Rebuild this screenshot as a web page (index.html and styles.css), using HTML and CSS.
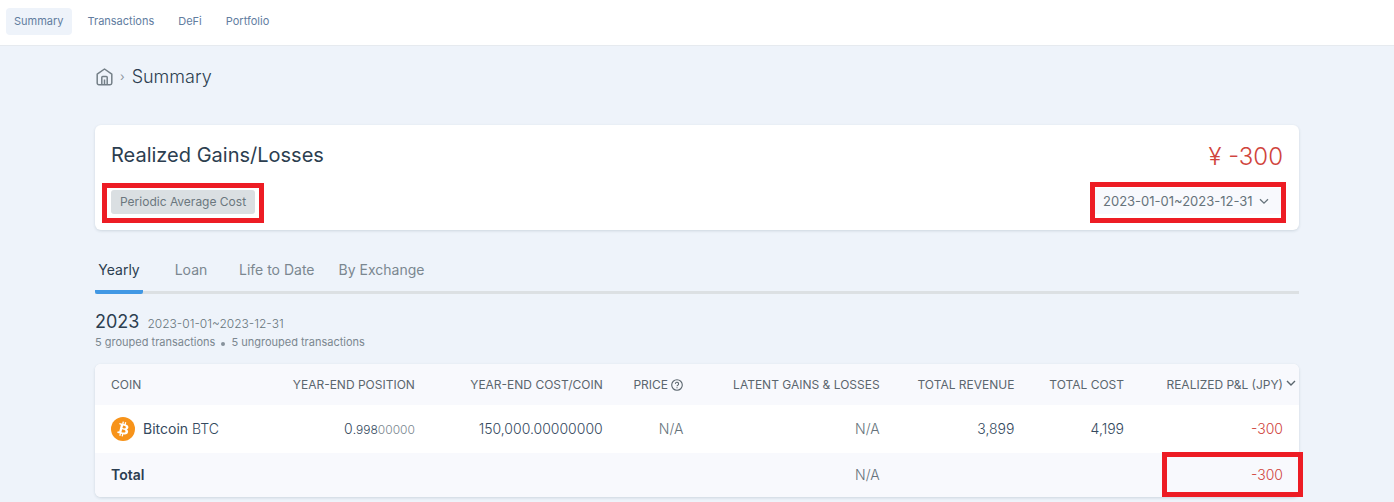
FILE: index.html
```
<!DOCTYPE html>
<html lang="en">
<head>
<meta charset="utf-8">
<meta name="viewport" content="width=device-width, initial-scale=1">
<title>Summary</title>
<link rel="stylesheet" href="styles.css">
</head>
<body>
<header class="topbar">
  <nav class="nav">
    <a class="nav-link nav-link-active" href="#">Summary</a>
    <a class="nav-link" href="#">Transactions</a>
    <a class="nav-link" href="#">DeFi</a>
    <a class="nav-link" href="#">Portfolio</a>
  </nav>
</header>
<main class="page">
  <div class="breadcrumb">
    <a class="home" href="#" aria-label="Home"><svg width="18" height="18" viewBox="0 0 18 18" fill="none" stroke="currentColor" stroke-width="1.500" stroke-linejoin="round"><path d="M2.200 6.200 9.500 1l7.300 5.200V15a1.700 1.700 0 0 1-1.700 1.700H3.900A1.700 1.700 0 0 1 2.200 15Z"/><path d="M6.800 16.500V9.500a.9.900 0 0 1 .9-.9h3.600a.9.900 0 0 1 .9.900v7M9.500 11.500v5"/></svg></a>
    <span class="crumb-sep">›</span>
    <h1 class="crumb-title">Summary</h1>
  </div>

  <section class="card summary">
    <div class="summary-row summary-head">
      <h2 class="summary-title">Realized Gains/Losses</h2>
      <span class="summary-value">¥ -300</span>
    </div>
    <div class="summary-row summary-foot">
      <span class="badge marked marked-badge">Periodic Average Cost</span>
      <span class="period marked marked-period">
        <select class="period-select" aria-label="Period"><option>2023-01-01~2023-12-31</option></select>
        <svg class="period-chevron" width="10" height="7" viewBox="0 0 10 7" fill="none" stroke="currentColor" stroke-width="1.300"><path d="M1 1.200l4 4 4-4"/></svg>
      </span>
    </div>
  </section>

  <nav class="tabs">
    <a class="tab tab-active" href="#">Yearly</a>
    <a class="tab" href="#">Loan</a>
    <a class="tab" href="#">Life to Date</a>
    <a class="tab" href="#">By Exchange</a>
  </nav>

  <div class="year">
    <h2 class="year-title">2023</h2>
    <span class="year-range">2023-01-01~2023-12-31</span>
  </div>
  <p class="counts"><span>5 grouped transactions</span><i class="dot"></i><span>5 ungrouped transactions</span></p>

  <table class="card coins">
    <colgroup><col class="c-coin"><col class="c-position"><col class="c-unit"><col class="c-price"><col class="c-latent"><col class="c-revenue"><col class="c-cost"><col class="c-pl"></colgroup>
    <thead>
      <tr>
        <th scope="col">COIN</th>
        <th scope="col">YEAR-END POSITION</th>
        <th scope="col">YEAR-END COST/COIN</th>
        <th scope="col">PRICE <svg class="help" width="12" height="12" viewBox="0 0 12 12" fill="none" stroke="currentColor" stroke-width="1.100"><circle cx="6" cy="6" r="5.300"/><path d="M4.400 4.900a1.600 1.600 0 1 1 2.400 1.300C6.200 6.500 6 6.700 6 7.300M6 8.200v1.100"/></svg></th>
        <th scope="col">LATENT GAINS &amp; LOSSES</th>
        <th scope="col">TOTAL REVENUE</th>
        <th scope="col">TOTAL COST</th>
        <th scope="col"><span class="sorted">REALIZED P&amp;L (JPY)<svg class="sort" width="10" height="7" viewBox="0 0 10 7" fill="none" stroke="currentColor" stroke-width="1.400"><path d="M1 1l4 4 4-4"/></svg></span></th>
      </tr>
    </thead>
    <tbody>
      <tr>
        <td><span class="coin"><svg width="24" height="24" viewBox="0 0 32 32"><circle cx="16" cy="16" r="16" fill="#f7931a"/><path fill="#fff" d="M23.189 14.020c.314-2.096-1.283-3.223-3.465-3.975l.708-2.840-1.728-.430-.690 2.765c-.454-.114-.920-.220-1.385-.326l.695-2.783L15.596 6l-.708 2.839c-.376-.086-.746-.170-1.104-.260l.002-.009-2.384-.595-.460 1.846s1.283.294 1.256.312c.700.175.826.638.805 1.006l-.806 3.235c.048.012.110.030.180.057l-.183-.045-1.130 4.532c-.086.212-.303.531-.793.410.018.025-1.256-.313-1.256-.313l-.858 1.978 2.250.561c.418.105.828.215 1.231.318l-.715 2.872 1.727.430.708-2.840c.472.127.930.245 1.378.357l-.706 2.828 1.728.430.715-2.866c2.948.558 5.164.333 6.097-2.333.752-2.146-.037-3.385-1.588-4.192 1.130-.260 1.980-1.003 2.207-2.538zm-3.950 5.538c-.533 2.147-4.148.986-5.320.695l.950-3.805c1.172.293 4.929.872 4.370 3.110zm.535-5.569c-.487 1.953-3.495.960-4.470.717l.860-3.450c.975.243 4.118.696 3.610 2.733z"/></svg><span class="coin-name">Bitcoin <span class="coin-code">BTC</span></span></span></td>
        <td>0<span class="decimals">.998</span><span class="decimals zeros">00000</span></td>
        <td>150,000.00000000</td>
        <td class="muted">N/A</td>
        <td class="muted">N/A</td>
        <td>3,899</td>
        <td>4,199</td>
        <td class="loss">-300</td>
      </tr>
    </tbody>
    <tfoot>
      <tr>
        <th scope="row">Total</th>
        <td></td><td></td><td></td>
        <td class="muted">N/A</td>
        <td></td><td></td>
        <td class="loss marked marked-total">-300</td>
      </tr>
    </tfoot>
  </table>
</main>
</body>
</html>
```
FILE: styles.css
```
* { box-sizing: border-box; }
body {
  margin: 0;
  background: #eef3fa;
  color: #34495e;
  font-family: Inter, "Open Sans", sans-serif;
  font-size: 14px;
  line-height: 20px;
}
a { color: inherit; text-decoration: none; }
h1, h2, p { margin: 0; font-weight: 400; }
svg { flex: none; }

.topbar { padding: 8px 6px 10px; background: #fff; border-bottom: 1px solid #e6eaef; }
.nav { display: flex; gap: 8px; }
.nav-link { padding: 3px 8px 4px; border-radius: 4px; font-size: 11px; color: #627d9f; line-height: 20px; }
.nav-link-active { background: #eef3fa; }

.page { max-width: 1204px; margin: 0 auto; padding-bottom: 5px; }
.breadcrumb { display: flex; align-items: center; gap: 7px; padding: 19px 0 36px; }
.home { display: flex; color: #747f87; }
.crumb-sep { color: #8b959e; font-size: 12px; }
.crumb-title { font-size: 18px; font-weight: 300; line-height: 24px; color: #2c3e50; }

.card { background: #fff; border-radius: 6px; box-shadow: 0 1px 3px rgba(40, 60, 80, 0.16); }
.summary { padding: 16px; }
.summary-row { display: flex; justify-content: space-between; }
.summary-head { align-items: flex-start; }
.summary-foot { align-items: flex-end; padding-top: 15px; }
.summary-title { font-size: 20px; line-height: 28px; color: #2c3e50; }
.summary-value { font-size: 24px; font-weight: 300; line-height: 32px; color: #d0443c; }
.badge { padding: 2px 9px; border-radius: 3px; background: #dadfe2; color: #6b777e; font-size: 12px; }
.period { display: flex; align-items: center; background: #f8f9fd; color: #66737b; }
.period-select {
  appearance: none;
  border: 0;
  padding: 3px 30px 3px 8px;
  background: transparent;
  color: inherit;
  font: inherit;
  font-size: 13px;
  line-height: 20px;
}
.period-chevron { position: absolute; right: 14px; pointer-events: none; }

.marked { position: relative; }
.marked::after { content: ""; position: absolute; border: 5px solid #ed1c24; pointer-events: none; }
.marked-badge::after { inset: -7px -9px -9px; }
.marked-period::after { inset: -6px -3px -9px -5px; }
.marked-total::after { inset: -1px -4px 0 22px; }

.tabs { display: flex; gap: 24px; margin-top: 30px; border-bottom: 3px solid #dce0e3; }
.tab { min-width: 48px; padding-bottom: 10px; line-height: 20px; text-align: center; color: #7b8790; }
.tab-active { margin-bottom: -3px; border-bottom: 4px solid #4198e4; border-radius: 2px; color: #2c3e50; }

.year { display: flex; align-items: baseline; gap: 8px; margin-top: 16px; }
.year-title { font-size: 18px; line-height: 24px; color: #2c3e50; }
.year-range { font-size: 12px; font-weight: 300; color: #66737b; }
.counts { display: flex; align-items: center; gap: 6px; font-size: 11px; line-height: 16px; color: #7b8790; }
.dot { width: 4px; height: 4px; margin-top: 4px; border-radius: 50%; background: #87929b; }

.coins { width: 100%; margin-top: 14px; table-layout: fixed; border-collapse: separate; border-spacing: 0; white-space: nowrap; }
.c-coin { width: 14.700%; }
.c-position { width: 13.200%; }
.c-unit { width: 15.600%; }
.c-price { width: 6.700%; }
.c-latent { width: 16.300%; }
.c-revenue { width: 11.200%; }
.c-cost { width: 9.100%; }
.c-pl { width: 13.200%; }
.coins th, .coins td { padding: 0 16px; text-align: right; font-weight: 300; }
.coins th:first-child { text-align: left; }
.coins thead th { height: 41px; padding-left: 0; background: #f8f9fd; color: #5b666e; font-size: 12px; font-weight: 400; }
.coins thead th:first-child { padding-left: 16px; border-top-left-radius: 6px; }
.coins thead th:last-child { border-top-right-radius: 6px; }
.coins tbody td { height: 48px; }
.coins tbody td:first-child { text-align: left; }
.coins tfoot th, .coins tfoot td { height: 44px; background: #f8f9fd; }
.coins tfoot th { font-weight: 600; color: #2c3e50; border-bottom-left-radius: 6px; }
.coins tfoot td:last-child { border-bottom-right-radius: 6px; }
.coins td.muted { color: #66737b; }
.coins td.loss { color: #d0443c; }
.coin { display: flex; align-items: center; gap: 8px; }
.coin-name { font-weight: 400; }
.coin-code { font-weight: 300; }
.decimals { font-size: 12px; }
.zeros { color: #7b8790; }
.help { vertical-align: -2px; }
.sorted { position: relative; }
.sort { position: absolute; left: 100%; top: 3px; margin-left: 3px; }
```
